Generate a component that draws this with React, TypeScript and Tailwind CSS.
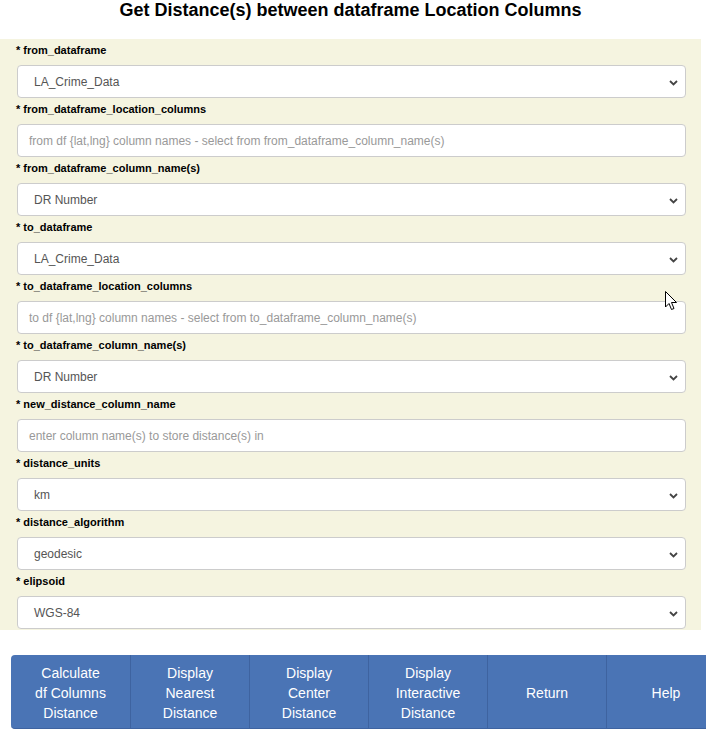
import React from "react";

type Field = { label: string; kind: "select" | "input"; value: string };

const fields: Field[] = [
  { label: "from_dataframe", kind: "select", value: "LA_Crime_Data" },
  { label: "from_dataframe_location_columns", kind: "input", value: "from df {lat,lng} column names - select from from_dataframe_column_name(s)" },
  { label: "from_dataframe_column_name(s)", kind: "select", value: "DR Number" },
  { label: "to_dataframe", kind: "select", value: "LA_Crime_Data" },
  { label: "to_dataframe_location_columns", kind: "input", value: "to df {lat,lng} column names - select from to_dataframe_column_name(s)" },
  { label: "to_dataframe_column_name(s)", kind: "select", value: "DR Number" },
  { label: "new_distance_column_name", kind: "input", value: "enter column name(s) to store distance(s) in" },
  { label: "distance_units", kind: "select", value: "km" },
  { label: "distance_algorithm", kind: "select", value: "geodesic" },
  { label: "elipsoid", kind: "select", value: "WGS-84" },
];

const buttons: string[][] = [
  ["Calculate", "df Columns", "Distance"],
  ["Display", "Nearest", "Distance"],
  ["Display", "Center", "Distance"],
  ["Display", "Interactive", "Distance"],
  ["Return"],
  ["Help"],
];

function Chevron() {
  return (
    <svg width="9" height="6" viewBox="0 0 9 6" className="absolute right-[7px] top-[14px]">
      <path d="M1 1 L4.5 4.5 L8 1" fill="none" stroke="#444" strokeWidth="1.8" />
    </svg>
  );
}

export default function App() {
  return (
    <div className="relative w-[710px] h-[735px] overflow-hidden bg-white font-['Liberation_Sans',Arial,sans-serif]">
      <div className="w-[701px]">
        <h1 className="text-[18px] leading-[20px] font-bold text-black text-center h-[39px]">
          Get Distance(s) between dataframe Location Columns
        </h1>
        <div className="bg-[#f5f4e0] pl-[17px] pr-[15px] pb-[1px]">
          {fields.map((f) => (
            <div key={f.label}>
              <div className="h-[26px] pt-[5px] -ml-[1px] text-[11px] leading-[13px] font-bold text-black">
                * {f.label}
              </div>
              {f.kind === "select" ? (
                <div className="relative h-[33px] bg-white border border-[#cccccc] rounded-[4px] pl-[16px] pt-[1px] text-[12px] leading-[31px] text-[#555555]">
                  {f.value}
                  <Chevron />
                </div>
              ) : (
                <div className="h-[33px] bg-white border border-[#cccccc] rounded-[4px] pl-[11px] pt-[1px] text-[12px] leading-[31px] text-[#999999] whitespace-nowrap overflow-hidden">
                  {f.value}
                </div>
              )}
            </div>
          ))}
        </div>
      </div>
      <div className="mt-[25px] ml-[11px] flex w-[695px]">
        {buttons.map((lines, i) => (
          <div
            key={i}
            className={`${i === 5 ? "w-[100px]" : "w-[119px]"} h-[74px] shrink-0 flex flex-col items-center justify-center pt-[3px] bg-[#4a74b5] border-b border-[#3e63a0] text-white text-[14px] leading-[20px] ${
              i === 0 ? "rounded-l-[4px]" : "border-l border-l-[#3e63a0]"
            }`}
          >
            {lines.map((l) => (
              <span key={l} className={i === 5 ? "pl-[19px]" : ""}>{l}</span>
            ))}
          </div>
        ))}
      </div>
      <svg
        className="absolute left-[665px] top-[291px]"
        width="13"
        height="20"
        viewBox="0 0 13 20"
      >
        <path
          d="M0.5 0.5 L0.5 16 L4 12.5 L6.5 18.5 L9 17.5 L6.5 11.5 L11.5 11.5 Z"
          fill="white"
          stroke="black"
          strokeWidth="1"
          strokeLinejoin="miter"
        />
      </svg>
    </div>
  );
}
